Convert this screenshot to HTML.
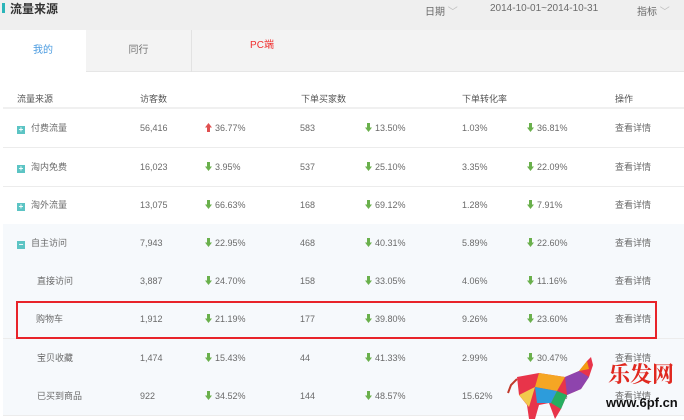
<!DOCTYPE html>
<html><head><meta charset="utf-8"><style>
*{margin:0;padding:0;box-sizing:border-box}
body{width:684px;height:420px;overflow:hidden;background:#fff;font-family:"Liberation Sans","Noto Sans CJK SC",sans-serif;font-size:9px;color:#6a6a6a;position:relative}
.hdr{position:absolute;left:0;top:0;width:684px;height:30px;background:#efefef}
.bar{position:absolute;left:2px;top:3px;width:3px;height:10px;background:#2bb5b9}
.title{position:absolute;left:10px;top:0px;font-size:12px;font-weight:bold;color:#333}
.tabs{position:absolute;left:0;top:30px;width:684px;height:42px;background:#f3f3f3;border-bottom:1px solid #e6e6e6}
.tab{position:absolute;top:0;height:42px;line-height:42px;font-size:10px;text-align:center}
.t{position:absolute;white-space:nowrap}
.row{position:absolute;left:3px;width:681px;height:39px;border-bottom:1px solid #ececec}
.alt{background:#f6f9fc}
.c{position:absolute;top:14px;white-space:nowrap;line-height:11px;height:11px}
.a{display:inline-block;width:7px;height:9px;vertical-align:-1px;margin-right:3px}
.ic{display:inline-block;width:8px;height:8px;background:#5cc4c4;color:#fff;font-size:8px;line-height:8px;text-align:center;margin-right:6px;vertical-align:-1px;font-weight:bold}
</style></head><body>
<svg width="0" height="0" style="position:absolute"><defs>
<symbol id="dn" viewBox="0 0 7 9"><rect x="2" y="0" width="3" height="5" fill="#6ab04c"/><polygon points="0,4.5 7,4.5 3.5,9" fill="#6ab04c"/></symbol>
<symbol id="up" viewBox="0 0 7 9"><rect x="2" y="4" width="3" height="5" fill="#e05050"/><polygon points="0,4.5 7,4.5 3.5,0" fill="#e05050"/></symbol>
</defs></svg>
<div class="hdr"><div class="bar"></div><div class="title">流量来源</div>
<div class="t" style="left:425px;top:3px;font-size:10px">日期 <span style="color:#bbb">﹀</span></div>
<div class="t" style="left:490px;top:3px;font-size:10px">2014-10-01~2014-10-31</div>
<div class="t" style="left:637px;top:3px;font-size:10px">指标 <span style="color:#bbb">﹀</span></div>
</div>
<div class="tabs">
<div class="tab" style="left:0;width:86px;height:43px;background:#fff;color:#4a9be0">我的</div>
<div class="tab" style="left:86px;width:106px;border-right:1px solid #e2e2e2;color:#777">同行</div>
<div class="tab" style="left:192px;width:140px;color:#f03030;line-height:32px">PC端</div>
</div>
<div class="t" style="left:17px;top:92px;color:#555">流量来源</div>
<div class="t" style="left:140px;top:92px;color:#555">访客数</div>
<div class="t" style="left:301px;top:92px;color:#555">下单买家数</div>
<div class="t" style="left:462px;top:92px;color:#555">下单转化率</div>
<div class="t" style="left:615px;top:92px;color:#555">操作</div>
<div style="position:absolute;left:3px;top:107px;width:681px;height:2px;background:#f0f0f0"></div>

<div class="row" style="top:109px"><span class="c" style="left:14px"><span class="ic">+</span>付费流量</span><span class="c" style="left:137px">56,416</span><span class="c" style="left:202px"><svg class="a"><use href="#up"/></svg>36.77%</span><span class="c" style="left:297px">583</span><span class="c" style="left:362px"><svg class="a"><use href="#dn"/></svg>13.50%</span><span class="c" style="left:459px">1.03%</span><span class="c" style="left:524px"><svg class="a"><use href="#dn"/></svg>36.81%</span><span class="c" style="left:612px">查看详情</span></div>
<div class="row" style="top:148px"><span class="c" style="left:14px"><span class="ic">+</span>淘内免费</span><span class="c" style="left:137px">16,023</span><span class="c" style="left:202px"><svg class="a"><use href="#dn"/></svg>3.95%</span><span class="c" style="left:297px">537</span><span class="c" style="left:362px"><svg class="a"><use href="#dn"/></svg>25.10%</span><span class="c" style="left:459px">3.35%</span><span class="c" style="left:524px"><svg class="a"><use href="#dn"/></svg>22.09%</span><span class="c" style="left:612px">查看详情</span></div>
<div class="row" style="top:186px"><span class="c" style="left:14px"><span class="ic">+</span>淘外流量</span><span class="c" style="left:137px">13,075</span><span class="c" style="left:202px"><svg class="a"><use href="#dn"/></svg>66.63%</span><span class="c" style="left:297px">168</span><span class="c" style="left:362px"><svg class="a"><use href="#dn"/></svg>69.12%</span><span class="c" style="left:459px">1.28%</span><span class="c" style="left:524px"><svg class="a"><use href="#dn"/></svg>7.91%</span><span class="c" style="left:612px">查看详情</span></div>
<div class="row alt" style="top:224px"><span class="c" style="left:14px"><span class="ic">−</span>自主访问</span><span class="c" style="left:137px">7,943</span><span class="c" style="left:202px"><svg class="a"><use href="#dn"/></svg>22.95%</span><span class="c" style="left:297px">468</span><span class="c" style="left:362px"><svg class="a"><use href="#dn"/></svg>40.31%</span><span class="c" style="left:459px">5.89%</span><span class="c" style="left:524px"><svg class="a"><use href="#dn"/></svg>22.60%</span><span class="c" style="left:612px">查看详情</span></div>
<div class="row alt" style="top:262px"><span class="c" style="left:34px">直接访问</span><span class="c" style="left:137px">3,887</span><span class="c" style="left:202px"><svg class="a"><use href="#dn"/></svg>24.70%</span><span class="c" style="left:297px">158</span><span class="c" style="left:362px"><svg class="a"><use href="#dn"/></svg>33.05%</span><span class="c" style="left:459px">4.06%</span><span class="c" style="left:524px"><svg class="a"><use href="#dn"/></svg>11.16%</span><span class="c" style="left:612px">查看详情</span></div>
<div class="row alt" style="top:300px"><span class="c" style="left:33px">购物车</span><span class="c" style="left:137px">1,912</span><span class="c" style="left:202px"><svg class="a"><use href="#dn"/></svg>21.19%</span><span class="c" style="left:297px">177</span><span class="c" style="left:362px"><svg class="a"><use href="#dn"/></svg>39.80%</span><span class="c" style="left:459px">9.26%</span><span class="c" style="left:524px"><svg class="a"><use href="#dn"/></svg>23.60%</span><span class="c" style="left:612px">查看详情</span></div>
<div class="row alt" style="top:339px"><span class="c" style="left:34px">宝贝收藏</span><span class="c" style="left:137px">1,474</span><span class="c" style="left:202px"><svg class="a"><use href="#dn"/></svg>15.43%</span><span class="c" style="left:297px">44</span><span class="c" style="left:362px"><svg class="a"><use href="#dn"/></svg>41.33%</span><span class="c" style="left:459px">2.99%</span><span class="c" style="left:524px"><svg class="a"><use href="#dn"/></svg>30.47%</span><span class="c" style="left:612px">查看详情</span></div>
<div class="row alt" style="top:377px"><span class="c" style="left:34px">已买到商品</span><span class="c" style="left:137px">922</span><span class="c" style="left:202px"><svg class="a"><use href="#dn"/></svg>34.52%</span><span class="c" style="left:297px">144</span><span class="c" style="left:362px"><svg class="a"><use href="#dn"/></svg>48.57%</span><span class="c" style="left:459px">15.62%</span><span class="c" style="left:524px"><svg class="a"><use href="#dn"/></svg>45.40%</span><span class="c" style="left:612px">查看详情</span></div>

<div style="position:absolute;left:16px;top:301px;width:641px;height:38px;border:2px solid #e8232a"></div>

<svg style="position:absolute;left:505px;top:355px" width="105" height="65" viewBox="0 0 105 65">
<polyline points="12,24 6,30 3,38" stroke="#c0392b" stroke-width="2" fill="none"/>
<polygon points="12,22 34,18 60,22 74,16 82,6 86,2 88,10 84,22 76,34 62,40 56,54 50,64 44,48 34,50 30,64 24,64 22,50 14,40" fill="#e8344a"/>
<polygon points="34,18 60,22 52,36 30,32" fill="#f5a623"/>
<polygon points="60,22 74,16 84,22 76,34 62,40" fill="#8e44ad"/>
<polygon points="30,32 52,36 46,48 32,48" fill="#2d9cdb"/>
<polygon points="52,36 62,40 56,54 46,48" fill="#27ae60"/>
<polygon points="14,40 30,32 24,52" fill="#f2c94c"/>
<polygon points="74,16 82,6 84,14" fill="#f39c12"/>
</svg>
<div class="t" style="left:608px;top:358px;font-size:22px;font-weight:bold;color:#e0281f;font-family:'Noto Serif CJK SC',serif">乐发网</div>
<div class="t" style="left:606px;top:395px;font-size:13px;font-weight:bold;color:#111">www.6pf.cn</div>
</body></html>
